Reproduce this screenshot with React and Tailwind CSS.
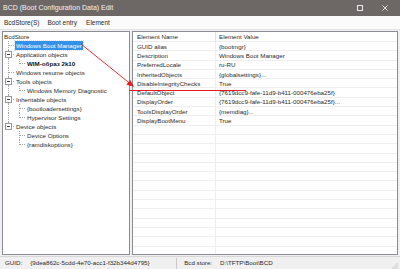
import React from 'react';

const tree = [
  { label: 'Windows Boot Manager', level: 1, selected: true },
  { label: 'Application objects', level: 1, box: true },
  { label: 'WIM-образ 2k10', level: 2, bold: true, last: true },
  { label: 'Windows resume objects', level: 1 },
  { label: 'Tools objects', level: 1, box: true },
  { label: 'Windows Memory Diagnostic', level: 2, last: true },
  { label: 'Inheritable objects', level: 1, box: true },
  { label: '{bootloadersettings}', level: 2 },
  { label: 'Hypervisor Settings', level: 2, last: true },
  { label: 'Device objects', level: 1, box: true, last: true },
  { label: 'Device Options', level: 2, parentLast: true },
  { label: '{ramdiskoptions}', level: 2, parentLast: true, last: true },
];

const elements = [
  ['GUID alias', '{bootmgr}'],
  ['Description', 'Windows Boot Manager'],
  ['PreferredLocale', 'ru-RU'],
  ['InheritedObjects', '{globalsettings}...'],
  ['DisableIntegrityChecks', 'True'],
  ['DefaultObject', '{7619dcc9-fafe-11d9-b411-000476eba25f}'],
  ['DisplayOrder', '{7619dcc9-fafe-11d9-b411-000476eba25f}...'],
  ['ToolsDisplayOrder', '{memdiag}...'],
  ['DisplayBootMenu', 'True'],
];

// one 11x9 cell of the tree's dotted connector lines
function Conn({ kind, last, box }) {
  const dot = { stroke: '#a3a3a3', strokeDasharray: '1 1' };
  return (
    <svg width="11" height="9" className="shrink-0" shapeRendering="crispEdges">
      {kind !== 'none' && <line x1="5.5" y1="0" x2="5.5" y2={kind === 'branch' && last ? 4.5 : 9} {...dot} />}
      {kind === 'branch' && <line x1="6" y1="4.5" x2="11" y2="4.5" {...dot} />}
      {box && (
        <>
          <rect x="2.5" y="1.5" width="6" height="6" fill="#fff" stroke="#9a9a9a" />
          <line x1="4" y1="4.5" x2="7" y2="4.5" stroke="#3a3a3a" />
        </>
      )}
    </svg>
  );
}

function TreeRow({ item }) {
  return (
    <div className="flex h-[9px] items-center">
      {item.level === 2 && <Conn kind={item.parentLast ? 'none' : 'pass'} />}
      <Conn kind="branch" last={item.last} box={item.box} />
      {item.selected ? (
        <span className="ml-[1px] bg-[#3391ea] px-[1px] leading-[9px] text-white outline-1 outline-dotted outline-[#cfe3f8]">{item.label}</span>
      ) : (
        <span className={`ml-[2px] leading-[9px] ${item.bold ? 'font-bold text-[#111]' : ''}`}>{item.label}</span>
      )}
    </div>
  );
}

export default function App() {
  return (
    <div
      className="relative flex h-[269px] w-[400px] flex-col overflow-hidden bg-[#f0f0f0] text-[6.2px] text-[#2a2a2a]"
      style={{ fontFamily: '"Liberation Sans", Arial, sans-serif' }}
    >
      {/* Title bar */}
      <div className="flex h-[16px] shrink-0 items-center bg-[#6d6865] pl-[3px] text-[7px] text-[#f4f4f4]">
        <span>BCD (Boot Configuration Data) Edit</span>
        <div className="ml-auto flex items-center gap-[19px] pr-[12px]">
          <svg width="6" height="6" shapeRendering="crispEdges">
            <rect x="0.5" y="0.5" width="5" height="5" fill="none" stroke="#ececec" />
          </svg>
          <svg width="6" height="6">
            <path d="M0.5 0.5 L5.5 5.5 M5.5 0.5 L0.5 5.5" stroke="#ececec" strokeWidth="0.9" />
          </svg>
        </div>
      </div>

      {/* Menu bar */}
      <div className="flex h-[14px] shrink-0 items-center bg-[#fbfbfb] pl-[4px] text-[6.5px] border-b border-[#e3e3e3]">
        <span>BcdStore(S)</span>
        <span className="ml-[8px]">Boot entry</span>
        <span className="ml-[9px]">Element</span>
      </div>

      {/* Panels */}
      <div className="flex min-h-0 flex-1 gap-[2px] px-[2px] pt-[1px] pb-[1px]">
        <div className="w-[128px] shrink-0 border border-[#8a8d93] bg-white">
          <div className="flex h-[9px] items-center pl-[1px] leading-[9px]">BcdStore</div>
          {tree.map((item) => (
            <TreeRow key={item.label} item={item} />
          ))}
        </div>

        <div className="min-w-0 flex-1 overflow-hidden border border-[#8a8d93] bg-white">
          <div className="flex h-[10px] items-center border-b border-[#ededed]">
            <span className="w-[83px] shrink-0 border-r border-[#e2e2e2] pl-[4px] leading-[10px]">Element Name</span>
            <span className="pl-[3px]">Element Value</span>
          </div>
          {elements.map(([name, value]) => (
            <div key={name} className="flex h-[9.3px] items-center border-b border-[#eeeeee]">
              <span className="w-[83px] shrink-0 border-r border-[#eeeeee] pl-[4px] leading-[9px]">{name}</span>
              <span className="truncate pl-[3px] leading-[9px]">{value}</span>
            </div>
          ))}
          {Array.from({ length: 16 }).map((_, i) => (
            <div key={i} className="flex h-[9.3px] border-b border-[#eeeeee]">
              <span className="w-[83px] shrink-0 border-r border-[#eeeeee]" />
            </div>
          ))}
        </div>
      </div>

      {/* Status bar */}
      <div className="flex h-[13px] shrink-0 items-center border-t border-[#d6d6d6] bg-[#f0f0f0]">
        <span className="ml-[5px]">GUID:</span>
        <span className="ml-[8px] w-[146px]">{'{9dea862c-5cdd-4e70-acc1-f32b344d4795}'}</span>
        <span className="h-[11px] border-l border-[#c8c8c8]" />
        <span className="ml-[7px]">Bcd store:</span>
        <span className="ml-[8px]">D:\TFTP\Boot\BCD</span>
        <svg width="6" height="6" className="ml-auto mr-[2px] mt-[5px]">
          {[[5, 1], [5, 3], [3, 3], [5, 5], [3, 5], [1, 5]].map(([x, y]) => (
            <rect key={`${x}-${y}`} x={x - 0.5} y={y - 0.5} width="1" height="1" fill="#a8a8a8" />
          ))}
        </svg>
      </div>

      {/* Red annotation arrow and underline */}
      <svg className="pointer-events-none absolute inset-0" width="400" height="269">
        <line x1="81" y1="44" x2="130" y2="83.5" stroke="#e8191c" strokeWidth="0.9" />
        <polygon points="134,87 126.4,84.6 130.2,79.9" fill="#e8191c" />
        <line x1="129" y1="90.5" x2="246" y2="90.5" stroke="#e8191c" strokeWidth="1" />
      </svg>
    </div>
  );
}
